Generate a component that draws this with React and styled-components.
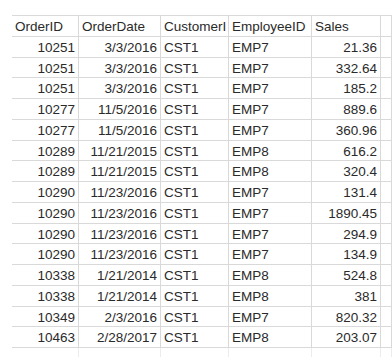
import * as React from 'react'
import styled, { createGlobalStyle } from 'styled-components'

const GlobalStyle = createGlobalStyle`
  html, body {
    margin: 0;
    padding: 0;
    background: #ffffff;
  }
`

const Sheet = styled.div`
  width: 392px;
  height: 362px;
  overflow: hidden;
  background: #ffffff;
  padding: 15px 0 0 12px;
  box-sizing: border-box;
  font-family: "Liberation Sans", Arial, sans-serif;
  font-size: 13.5px;
  color: #2a2a2a;
`

const Grid = styled.div`
  display: grid;
  grid-template-columns: 67px 82px 68px 83px 69px 1fr;
  grid-auto-rows: 20.75px;
  border-top: 1px solid #d9d9d9;
`

const Cell = styled.div`
  box-sizing: border-box;
  border-right: 1px solid #d9d9d9;
  border-bottom: 1px solid #d9d9d9;
  padding: ${(props) => (props.right ? '3px 3px 0 0' : '3px 0 0 3px')};
  line-height: 16px;
  white-space: nowrap;
  overflow: hidden;
  text-align: ${(props) => (props.right ? 'right' : 'left')};
`

const Tail = styled.div`
  display: grid;
  grid-template-columns: 67px 82px 68px 83px 69px 1fr;
  height: 9px;
`

const TailCell = styled.div`
  box-sizing: border-box;
  border-right: 1px solid #ececec;
`

// the sheet column is too narrow, only "CustomerI" shows
const columns = [
  { key: 'id', label: 'OrderID', right: true },
  { key: 'date', label: 'OrderDate', right: true },
  { key: 'cust', label: 'CustomerI' },
  { key: 'emp', label: 'EmployeeID' },
  { key: 'sales', label: 'Sales', right: true },
]

const orders = [
  ['10251', '3/3/2016', 'CST1', 'EMP7', '21.36'],
  ['10251', '3/3/2016', 'CST1', 'EMP7', '332.64'],
  ['10251', '3/3/2016', 'CST1', 'EMP7', '185.2'],
  ['10277', '11/5/2016', 'CST1', 'EMP7', '889.6'],
  ['10277', '11/5/2016', 'CST1', 'EMP7', '360.96'],
  ['10289', '11/21/2015', 'CST1', 'EMP8', '616.2'],
  ['10289', '11/21/2015', 'CST1', 'EMP8', '320.4'],
  ['10290', '11/23/2016', 'CST1', 'EMP7', '131.4'],
  ['10290', '11/23/2016', 'CST1', 'EMP7', '1890.45'],
  ['10290', '11/23/2016', 'CST1', 'EMP7', '294.9'],
  ['10290', '11/23/2016', 'CST1', 'EMP7', '134.9'],
  ['10338', '1/21/2014', 'CST1', 'EMP8', '524.8'],
  ['10338', '1/21/2014', 'CST1', 'EMP8', '381'],
  ['10349', '2/3/2016', 'CST1', 'EMP7', '820.32'],
  ['10463', '2/28/2017', 'CST1', 'EMP8', '203.07'],
]

export default function App() {
  return (
    <Sheet>
      <GlobalStyle />
      <Grid>
        {columns.map((c) => (
          <Cell key={c.key}>{c.label}</Cell>
        ))}
        <Cell />
        {orders.map((row, i) => (
          <React.Fragment key={i}>
            {row.map((v, j) => (
              <Cell key={j} right={columns[j].right}>{v}</Cell>
            ))}
            <Cell />
          </React.Fragment>
        ))}
      </Grid>
      <Tail>
        {[0, 1, 2, 3, 4, 5].map((n) => (
          <TailCell key={n} />
        ))}
      </Tail>
    </Sheet>
  )
}
